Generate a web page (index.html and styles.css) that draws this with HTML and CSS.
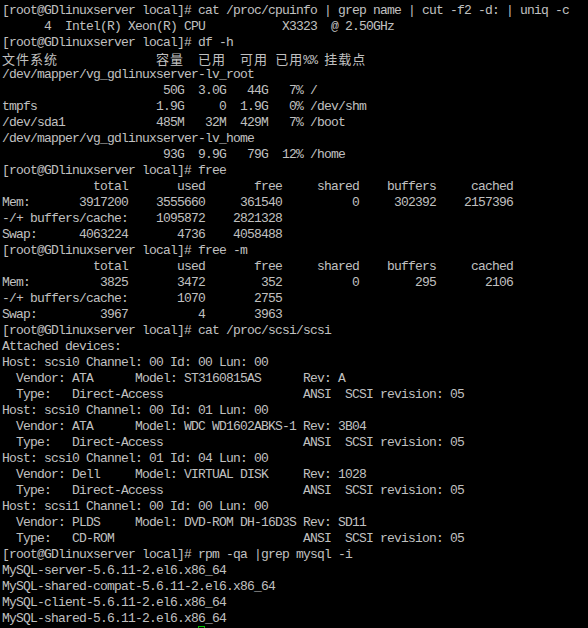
FILE: index.html
```html
<!DOCTYPE html>
<html>
<head>
<meta charset="utf-8">
<link rel="stylesheet" href="styles.css">
</head>
<body>
<div class="term">
<div class="ln">[root@GDlinuxserver local]# cat /proc/cpuinfo | grep name | cut -f2 -d: | uniq -c</div>
<div class="ln">      4  Intel(R) Xeon(R) CPU           X3323  @ 2.50GHz</div>
<div class="ln">[root@GDlinuxserver local]# df -h</div>
<div class="ln"><span class="cjk">文件系统</span>              <span class="cjk">容量</span>  <span class="cjk">已用</span>  <span class="cjk">可用</span> <span class="cjk">已用</span>%% <span class="cjk">挂载点</span></div>
<div class="ln">/dev/mapper/vg_gdlinuxserver-lv_root</div>
<div class="ln">                       50G  3.0G   44G   7% /</div>
<div class="ln">tmpfs                 1.9G     0  1.9G   0% /dev/shm</div>
<div class="ln">/dev/sda1             485M   32M  429M   7% /boot</div>
<div class="ln">/dev/mapper/vg_gdlinuxserver-lv_home</div>
<div class="ln">                       93G  9.9G   79G  12% /home</div>
<div class="ln">[root@GDlinuxserver local]# free</div>
<div class="ln">             total       used       free     shared    buffers     cached</div>
<div class="ln">Mem:       3917200    3555660     361540          0     302392    2157396</div>
<div class="ln">-/+ buffers/cache:    1095872    2821328</div>
<div class="ln">Swap:      4063224       4736    4058488</div>
<div class="ln">[root@GDlinuxserver local]# free -m</div>
<div class="ln">             total       used       free     shared    buffers     cached</div>
<div class="ln">Mem:          3825       3472        352          0        295       2106</div>
<div class="ln">-/+ buffers/cache:       1070       2755</div>
<div class="ln">Swap:         3967          4       3963</div>
<div class="ln">[root@GDlinuxserver local]# cat /proc/scsi/scsi</div>
<div class="ln">Attached devices:</div>
<div class="ln">Host: scsi0 Channel: 00 Id: 00 Lun: 00</div>
<div class="ln">  Vendor: ATA      Model: ST3160815AS      Rev: A</div>
<div class="ln">  Type:   Direct-Access                    ANSI  SCSI revision: 05</div>
<div class="ln">Host: scsi0 Channel: 00 Id: 01 Lun: 00</div>
<div class="ln">  Vendor: ATA      Model: WDC WD1602ABKS-1 Rev: 3B04</div>
<div class="ln">  Type:   Direct-Access                    ANSI  SCSI revision: 05</div>
<div class="ln">Host: scsi0 Channel: 01 Id: 04 Lun: 00</div>
<div class="ln">  Vendor: Dell     Model: VIRTUAL DISK     Rev: 1028</div>
<div class="ln">  Type:   Direct-Access                    ANSI  SCSI revision: 05</div>
<div class="ln">Host: scsi1 Channel: 00 Id: 00 Lun: 00</div>
<div class="ln">  Vendor: PLDS     Model: DVD-ROM DH-16D3S Rev: SD11</div>
<div class="ln">  Type:   CD-ROM                           ANSI  SCSI revision: 05</div>
<div class="ln">[root@GDlinuxserver local]# rpm -qa |grep mysql -i</div>
<div class="ln">MySQL-server-5.6.11-2.el6.x86_64</div>
<div class="ln">MySQL-shared-compat-5.6.11-2.el6.x86_64</div>
<div class="ln">MySQL-client-5.6.11-2.el6.x86_64</div>
<div class="ln">MySQL-shared-5.6.11-2.el6.x86_64</div>
<div class="ln">                            <span class="cursor"></span></div>
</div>
</body>
</html>
```
FILE: styles.css
```css
html, body {
  margin: 0;
  padding: 0;
  background: #000;
  width: 588px;
  height: 628px;
  overflow: hidden;
}
.term {
  padding: 3px 0 0 2px;
  font-family: "Liberation Mono", "Courier New", monospace;
  font-size: 13px;
  letter-spacing: -0.8px;
  color: #c0c0c0;
}
.ln {
  height: 16px;
  line-height: 16px;
  white-space: pre;
}
.cjk {
  font-family: "Noto Sans CJK SC", sans-serif;
  font-size: 13px;
  letter-spacing: 1px;
}
.cursor {
  display: inline-block;
  width: 7px;
  height: 15px;
  box-sizing: border-box;
  border: 1px solid #00c000;
  vertical-align: top;
  margin-top: -1px;
}
```
